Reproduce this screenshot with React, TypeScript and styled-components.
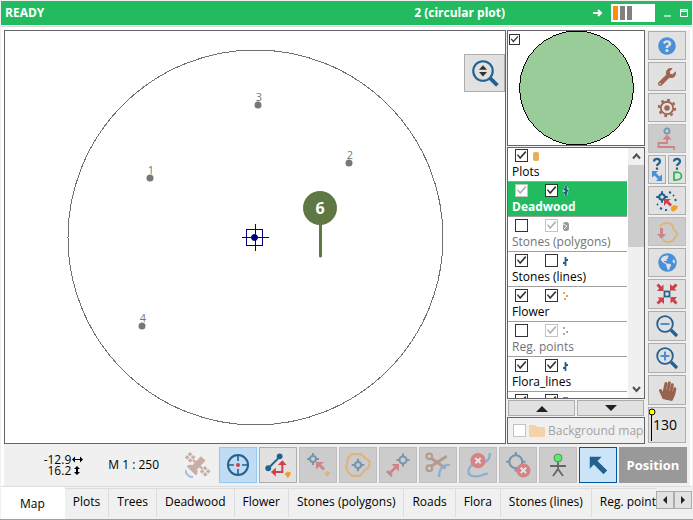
import React from "react";
import styled, { createGlobalStyle, css } from "styled-components";
import {
  FaQuestionCircle,
  FaWrench,
  FaHandPaper,
  FaGlobeAmericas,
  FaFolder,
} from "react-icons/fa";

const color = {
  green: "#22bb60",
  face: "#f0f0f0",
  button: "#e1e1e1",
  edge: "#adadad",
  frame: "#646469",
  navy: "#23628f",
  blue: "#4a90d9",
  red: "#cf3f49",
  orange: "#eda02f",
  brown: "#a0654f",
  line: "#dcdcdc",
};

const GlobalStyle = createGlobalStyle`
  * { box-sizing: border-box; }
  body {
    margin: 0;
    background: ${color.face};
    color: #000;
    font: 12px/16px "Open Sans", "Noto Sans", sans-serif;
  }
  button, input { font: inherit; color: inherit; margin: 0; padding: 0; }
`;

/* ---------- frame ---------- */

const Window = styled.div`
  display: flex;
  flex-direction: column;
  height: 100vh;
  padding: 1px 1px 0;
  border-bottom: 1px solid #a0a0a0;
`;

const TitleBar = styled.header`
  display: flex;
  align-items: center;
  height: 24px;
  padding: 0 0 0 4px;
  background: ${color.green};
  color: #fff;
  font-weight: 700;
`;

const Title = styled.span`
  margin-left: auto;
  margin-right: 88px;
`;

const Battery = styled.div`
  display: flex;
  gap: 2px;
  width: 44px;
  height: 18px;
  margin: 0 5px 0 8px;
  padding: 2px;
  background: #fff;
`;

const Cell = styled.span<{ $active?: boolean }>`
  width: 5px;
  background: ${(p) => (p.$active ? "#ff8c0a" : "#808080")};
`;

const TitleButton = styled.button`
  display: flex;
  width: 16px;
  border: 0;
  background: none;
  justify-content: center;
`;

const Page = styled.main`
  flex: 1;
  display: flex;
  flex-direction: column;
  min-height: 0;
  margin-top: 1px;
  padding: 3px 0 0 3px;
  background: #fff;
  border-top: 1px solid ${color.line};
  border-bottom: 1px solid ${color.line};
`;

const Workspace = styled.div`
  flex: 1;
  display: flex;
  min-height: 0;
  background: ${color.face};
  border-right: 2px solid #fff;
`;

const MapPane = styled.section`
  position: relative;
  flex: 1;
  min-width: 0;
  background: #fff;
  border: 1px solid ${color.frame};
`;

const MapDrawing = styled.svg`
  display: block;
  width: 100%;
  height: 100%;
`;

const SidePane = styled.aside`
  display: flex;
  flex-direction: column;
  width: 139px;
  padding-left: 1px;
`;

const Framed = styled.div`
  background: #fff;
  border: 1px solid ${color.frame};
`;

const Preview = styled(Framed)`
  position: relative;
  height: 116px;
  flex: none;
  margin-bottom: 1px;
  svg { display: block; width: 100%; height: 100%; }
  input { position: absolute; left: 1px; top: 3px; width: 11px; height: 11px; }
`;

/* ---------- layer list ---------- */

const LayerPanel = styled(Framed)`
  flex: 1;
  display: flex;
  min-height: 0;
  overflow: hidden;
`;

const Rows = styled.ul`
  flex: 1;
  margin: 0;
  padding: 0 1px 0 0;
  list-style: none;
  overflow: hidden;
`;

const Row = styled.li<{ $selected?: boolean; $dim?: boolean }>`
  height: 35px;
  padding-top: 1px;
  border-bottom: 1px solid #a0a0a0;
  color: ${(p) => (p.$dim ? "#737373" : "#000")};
  ${(p) =>
    p.$selected &&
    css`
      background: ${color.green};
      color: #fff;
      font-weight: 700;
    `}
  &:first-child { height: 34px; padding-top: 0; }
`;

const RowChecks = styled.div`
  display: flex;
  height: 15px;
  padding-left: 7px;
  align-items: center;
`;

const RowIcon = styled.svg`
  width: 12px;
  height: 12px;
  margin-left: 2px;
`;

const RowName = styled.div`
  padding: 1px 0 0 4px;
  white-space: nowrap;
`;

const Check = styled.input.attrs({ type: "checkbox" })`
  appearance: none;
  flex: none;
  width: 13px;
  height: 13px;
  border: 1px solid #333;
  background: #fff;
  & + & { margin-left: 17px; }
  &:checked::after {
    content: "";
    display: block;
    height: 100%;
    background: #333;
    clip-path: polygon(8% 46%, 18% 38%, 38% 62%, 84% 10%, 94% 20%, 38% 84%);
  }
  &:disabled { border-color: #c3c3c3; }
  &:disabled:checked::after { background: #b0b0b0; }
`;

const ScrollBar = styled.div`
  display: flex;
  flex-direction: column;
  align-items: center;
  justify-content: space-between;
  width: 16px;
  padding: 5px 0;
  background: ${color.face};
`;

const Thumb = styled.div`
  align-self: stretch;
  height: 82px;
  margin: 5px 0 auto;
  background: #cdcdcd;
`;

const Pair = styled.div`
  display: grid;
  grid-template-columns: 1fr 1fr;
  gap: 2px;
  padding: 1px;
  button { height: 16px; }
`;

const Background = styled(Framed)`
  display: flex;
  align-items: center;
  gap: 3px;
  height: 27px;
  padding-left: 5px;
  background: ${color.face};
  color: #a3a3a3;
  white-space: nowrap;
  svg { color: #f3d3a7; flex: none; }
`;

/* ---------- buttons ---------- */

const ToolButton = styled.button<{ $look?: "off" | "hot" | "picked" }>`
  display: flex;
  align-items: center;
  justify-content: center;
  min-width: 0;
  overflow: hidden;
  border: 1px solid ${color.edge};
  background: ${color.button};
  svg { flex: none; }
  ${(p) =>
    p.$look === "off" &&
    css`
      background: #cccccc;
      border-color: #bfbfbf;
      svg { opacity: 0.5; }
      svg.vivid { opacity: 1; }
    `}
  ${(p) =>
    p.$look === "hot" &&
    css`
      background: #bfdcf4;
      border-color: #90c8f6;
    `}
  ${(p) =>
    p.$look === "picked" &&
    css`
      background: #cce4f7;
      border-color: #00559b;
    `}
`;

const MapZoomButton = styled(ToolButton)`
  position: absolute;
  top: 23px;
  right: 0;
  width: 41px;
  height: 38px;
`;

const ToolColumn = styled.nav`
  display: flex;
  flex-direction: column;
  gap: 2px;
  width: 46px;
  padding: 1px 4px 0 4px;
  margin-left: -1px;
  & > * { height: 29px; flex: none; }
  & > .tall { height: 30px; }
  & > .post { height: 36px; flex: none; }
`;

const Split = styled.div`
  display: grid;
  grid-template-columns: 1fr 1fr;
  gap: 2px;
`;

const PostButton = styled(ToolButton)`
  justify-content: flex-start;
  font-size: 14px;
  svg { margin-right: -4px; }
`;

const BottomBar = styled.div`
  display: flex;
  align-items: center;
  gap: 2px;
  height: 42px;
  flex: none;
  padding-right: 3px;
  background: ${color.face};
  border-right: 2px solid #fff;
  & > button { width: 38px; height: 36px; flex: none; }
`;

const Readout = styled.div`
  display: grid;
  grid-template-columns: auto auto;
  align-items: center;
  justify-content: end;
  column-gap: 1px;
  line-height: 11px;
  text-align: right;
  margin-left: auto;
`;

const Scale = styled.div`
  margin: 0 18px 0 23px;
  white-space: nowrap;
`;

const Satellite = styled(ToolButton)`
  border: 0;
  background: none;
`;

const Position = styled(ToolButton)`
  && { width: 68px; }
  border: 0;
  background: #999;
  color: #fff;
  font-size: 13px;
  font-weight: 700;
`;

/* ---------- tabs ---------- */

const Tabs = styled.div`
  display: flex;
  height: 32px;
  flex: none;
`;

const TabList = styled.div`
  flex: 1;
  display: flex;
  min-width: 0;
  overflow: hidden;
`;

const Tab = styled.button<{ $active?: boolean }>`
  flex: none;
  height: 29px;
  margin-top: 1px;
  padding: 0 8px 2px;
  border: 0;
  border-top: 1px solid ${color.line};
  border-right: 1px solid ${color.line};
  background: ${color.face};
  white-space: nowrap;
  ${(p) =>
    p.$active &&
    css`
      height: 32px;
      margin-top: 0;
      padding: 1px 19px 0;
      border-color: #fff;
      background: #fff;
    `}
`;

const TabScroll = styled.div`
  display: flex;
  padding-top: 4px;
  button { width: 18px; height: 18px; }
`;

/* ---------- icons ---------- */

type IconProps = { children: React.ReactNode; size?: number; className?: string };
const Icon = ({ children, size = 24, className }: IconProps) => (
  <svg className={className} width={size} height={size} viewBox="0 0 24 24" fill="none" aria-hidden="true">
    {children}
  </svg>
);

const Target = ({ x, y, r = 3.5 }: { x: number; y: number; r?: number }) => (
  <g stroke={color.navy} strokeWidth="2">
    <circle cx={x} cy={y} r={r} />
    <path
      d={`M${x} ${y - r - 3}v3.5M${x} ${y + r - 0.5}v3.5M${x - r - 3} ${y}h3.5M${x + r - 0.5} ${y}h3.5`}
    />
  </g>
);

const Gear = () => (
  <Icon size={22}>
    <circle cx="12" cy="12" r="6.8" stroke={color.brown} strokeWidth="2" />
    <circle cx="12" cy="12" r="3" fill={color.brown} />
    <circle cx="12" cy="12" r="8.8" stroke={color.brown} strokeWidth="2.4" strokeDasharray="3 3.9" />
  </Icon>
);

const Sensor = () => (
  <Icon>
    <circle cx="12" cy="4" r="2.6" stroke={color.navy} strokeWidth="1.8" />
    <path d="M12 7.500l4.500 5h-9z" fill={color.red} />
    <path d="M12 12v4H3.500v4h15.500v3" stroke={color.red} strokeWidth="1.8" />
  </Icon>
);

const QueryMark = () => (
  <path d="M5 4.500C5 1 11 1 11 4.500C11 7 8 6.500 8 9M8 10.500v2.300" stroke={color.navy} strokeWidth="2.200" />
);

const QueryMove = () => (
  <svg width="16" height="25" viewBox="0 0 16 25" fill="none" aria-hidden="true">
    <QueryMark />
    <path d="M3 14h6l-2 2 3.500 3.500 2.500-2V24H7l2-2-3.500-3.500L3 20.500z" fill={color.blue} />
  </svg>
);

const QueryArea = () => (
  <svg width="16" height="25" viewBox="0 0 16 25" fill="none" aria-hidden="true">
    <QueryMark />
    <path d="M5 15.500v7.500C10 23.500 13 21.500 12.500 18.500C12 15 8 15 5 15.500z" stroke="#35b65a" strokeWidth="1.800" />
  </svg>
);

const SnapPoints = () => (
  <Icon>
    <Target x={7} y={8} r={2.8} />
    <path d="M9 10h7l-2.500 2 3.500 3.500-2 2-3.500-3.500L9 17z" fill={color.red} />
    <path d="M14 3l2 1M18 6l1 1M20 10l1 2M2 15l1 1M5 19l2 1M10 21h2" stroke={color.navy} strokeWidth="2" />
    <path d="M16 18l3-2 4 1-1 3-4 3-2-2z" fill={color.orange} />
  </Icon>
);

const ImportArea = () => (
  <Icon>
    <path
      d="M5 7C6 4 9 3 12 3c4 0 6 2 6 5 0 2 4 3 4 6s-2 3-3 5-3 3-6 3-5-1-5-3"
      stroke={color.orange}
      strokeWidth="2"
    />
    <path d="M5 8h3v6h3l-4.500 5L2 14h3z" fill={color.red} />
  </Icon>
);

const ZoomExtent = () => (
  <Icon>
    {[0, 90, 180, 270].map((a) => (
      <path
        key={a}
        d="M1.500 3.500L3.500 1.500 6.500 4.500 8.500 2.500V9H2L4.200 6.500z"
        fill={color.red}
        transform={`rotate(${a} 12 12)`}
      />
    ))}
    <rect x="9.500" y="9.500" width="5" height="5" stroke={color.navy} strokeWidth="1.800" />
  </Icon>
);

const Lens = ({ plus }: { plus?: boolean }) => (
  <Icon>
    <circle cx="10" cy="10" r="7.800" stroke={color.navy} strokeWidth="1.800" />
    <path d="M16 16l6 6" stroke={color.navy} strokeWidth="3.200" />
    <path d={plus ? "M5.500 10h9M10 5.500v9" : "M5.500 10h9"} stroke={color.blue} strokeWidth="2" />
  </Icon>
);

const LensUpDown = () => (
  <Icon size={32}>
    <circle cx="10.500" cy="10.500" r="7.300" stroke={color.navy} strokeWidth="1.600" />
    <path d="M15.800 15.800l5.500 5.500" stroke={color.navy} strokeWidth="2.800" />
    <path d="M7.500 9.500L10.500 6.200l3 3.300zM7.500 11.300h6l-3 3.300z" fill="#333" />
  </Icon>
);

const SatelliteDish = () => (
  <Icon size={26}>
    <g transform="rotate(43 12 11)">
      <path
        d="M-1 8h3v3h-3zM3 8h3v3H3zM-1 12h3v3h-3zM3 12h3v3H3zM18 8h3v3h-3zM22 8h3v3h-3zM18 12h3v3h-3zM22 12h3v3h-3zM6 10.500h12v2H6zM9 4h6v11H9zM6 20c0-7 12-7 12 0z"
        fill="#c9aea6"
      />
      <path d="M7 23c3 2.500 7 2.500 10 0" stroke="#9cc3ec" strokeWidth="2" />
    </g>
  </Icon>
);

const Crosshair = () => (
  <Icon>
    <circle cx="12" cy="12" r="10" stroke={color.navy} strokeWidth="2" />
    <path d="M12 2v6M12 16v6M2 12h6M16 12h6" stroke={color.navy} strokeWidth="1.600" />
    <circle cx="12" cy="12" r="2" fill={color.red} />
  </Icon>
);

const EditLine = () => (
  <Icon size={26}>
    <path d="M3 15L14 4" stroke={color.navy} strokeWidth="1.8" />
    <circle cx="13.500" cy="4" r="2.700" fill={color.navy} />
    <circle cx="3" cy="15" r="2.700" fill={color.navy} />
    <path d="M16 10v8.500H9" stroke={color.red} strokeWidth="1.800" />
    <path d="M12 12L16 7.500l4 4.500zM10 14.500v8L5.500 18.500z" fill={color.red} />
    <path d="M18 20l3-2 3 1-1 3-2 2z" fill={color.orange} />
  </Icon>
);

const MoveToPoint = () => (
  <Icon>
    <Target x={7} y={6} r={3} />
    <path d="M10 9h8l-3 2.500 4 4-2 2-4-4-3 3z" fill={color.red} />
    <path d="M18 20l3-2 3 1-1 3-2 2z" fill={color.orange} />
  </Icon>
);

const AreaPoint = () => (
  <Icon size={26}>
    <path
      d="M6 2h9l3 3 5 4-1 5-4 3-4 5-7 0-4-3-2-5 1-4 1-5z"
      stroke={color.orange}
      strokeWidth="2"
      strokeLinejoin="round"
    />
    <Target x={12} y={12} r={2.8} />
  </Icon>
);

const MeasurePoint = () => (
  <Icon>
    <Target x={17} y={7} r={3.500} />
    <path d="M3 21L10 14M1 18l5 5" stroke={color.red} strokeWidth="2.600" />
    <path d="M5.500 11H13v7.500z" fill={color.red} />
  </Icon>
);

const Cut = () => (
  <Icon size={26}>
    <g stroke="#a06a55" strokeWidth="2">
      <circle cx="4" cy="4" r="2.600" />
      <circle cx="4" cy="15" r="2.600" />
      <path d="M6 6L19 15M6 13L20 4" strokeWidth="2.800" />
    </g>
    <path d="M23 12c-6-1-10 3-10 11" stroke={color.blue} strokeWidth="2" />
  </Icon>
);

const Cross = ({ x, y, r }: { x: number; y: number; r: number }) => (
  <g>
    <circle cx={x} cy={y} r={r} fill="#e03a44" />
    <path
      d={`M${x - 2.5} ${y - 2.5}l5 5M${x + 2.5} ${y - 2.5}l-5 5`}
      stroke="#fff"
      strokeWidth="1.800"
    />
  </g>
);

const DeleteLine = () => (
  <Icon size={26}>
    <path d="M23 1c0 9-6 9-13 10S1 20 6 22s9-1 15-2" stroke={color.blue} strokeWidth="2" />
    <Cross x={12} y={8} r={7} />
  </Icon>
);

const DeletePoint = () => (
  <Icon size={26}>
    <Target x={10} y={9} r={6} />
    <Cross x={17} y={17} r={6.500} />
  </Icon>
);

const Person = () => (
  <Icon className="vivid">
    <path d="M4 13h16M12 9v8M12 16l-5 7M12 16l5 7" stroke="#666" strokeWidth="1.800" />
    <circle cx="12" cy="5" r="4" fill="#55ee66" stroke="#5c8c60" />
  </Icon>
);

const Pointer = () => (
  <Icon size={22}>
    <path d="M3 3h13l-4.500 4.500L22 18l-4 4L7.500 11.500 3 16z" fill={color.navy} />
  </Icon>
);

const Triangle = ({ d, w = 12, h = 7 }: { d: string; w?: number; h?: number }) => (
  <svg width={w} height={h} viewBox={`0 0 ${w} ${h}`} aria-hidden="true">
    <path d={d} fill="#222" />
  </svg>
);

const Chevron = ({ d }: { d: string }) => (
  <svg width="9" height="7" viewBox="0 0 9 7" fill="none" aria-hidden="true">
    <path d={d} stroke="#505050" strokeWidth="2" />
  </svg>
);

const DoubleArrow = ({ vertical }: { vertical?: boolean }) => (
  <svg width="11" height="9" viewBox="0 0 11 9" aria-hidden="true">
    <path
      d={
        vertical
          ? "M5 0L8 3H6V6H8L5 9 2 6H4V3H2z"
          : "M0 4.500L3 1.500V4H8V1.500L11 4.500 8 7.500V5H3V7.500z"
      }
      fill="#000"
    />
  </svg>
);

/* ---------- data ---------- */

type Mark = "block" | "log" | "stone" | "line" | "dots" | "graydots" | "herb";

const marks: Record<Mark, React.ReactNode> = {
  block: <rect x="3" y="2" width="6" height="9" rx="2" fill="#e9ad5d" />,
  log: (
    <g fill="none">
      <path d="M6 1v10M3 5l5 3M8 3L5 8" stroke="#fff" strokeWidth="3" opacity=".5" />
      <path d="M6 1v10M4 4l4 2M4 8l3-1" stroke="#174f80" strokeWidth="1.500" />
    </g>
  ),
  stone: (
    <g>
      <rect x="3" y="2" width="6" height="9" rx="2.500" fill="#999" />
      <path d="M3 4l4 2-3 3" stroke="#eee" fill="none" />
    </g>
  ),
  line: <path d="M5.500 2v9M5.500 5H8M5.500 8H3" stroke={color.navy} strokeWidth="1.800" fill="none" />,
  dots: <path d="M3 2h2v2H3zM6 5h2v2H6zM4 8h2v2H4z" fill="#e9a64b" />,
  graydots: <path d="M3 2h2v2H3zM6 6h2v2H6zM3 8h2v2H3z" fill="#aaa" />,
  herb: <rect x="3" y="2" width="5" height="8" fill="#35a65a" />,
};

type Layer = {
  name: string;
  mark: Mark;
  visible: boolean;
  visibleLocked?: boolean;
  editable?: boolean;
  editLocked?: boolean;
  selected?: boolean;
};

const layers: Layer[] = [
  { name: "Plots", mark: "block", visible: true },
  { name: "Deadwood", mark: "log", visible: true, visibleLocked: true, editable: true, selected: true },
  { name: "Stones (polygons)", mark: "stone", visible: false, editable: true, editLocked: true },
  { name: "Stones (lines)", mark: "line", visible: true, editable: false },
  { name: "Flower", mark: "dots", visible: true, editable: true },
  { name: "Reg. points", mark: "graydots", visible: false, editable: true, editLocked: true },
  { name: "Flora_lines", mark: "line", visible: true, editable: true },
  { name: "", mark: "herb", visible: true, editable: true },
];

const trees = [
  { id: "1", x: 145, y: 147, lx: 146, ly: 143 },
  { id: "2", x: 344, y: 132, lx: 345, ly: 128 },
  { id: "3", x: 253, y: 74, lx: 254, ly: 70 },
  { id: "4", x: 137, y: 295, lx: 138, ly: 291 },
];

const tabs = [
  "Map",
  "Plots",
  "Trees",
  "Deadwood",
  "Flower",
  "Stones (polygons)",
  "Roads",
  "Flora",
  "Stones (lines)",
  "Reg. points",
];

const PlotMap = () => (
  <MapDrawing viewBox="0 0 500 411" preserveAspectRatio="xMinYMin meet">
    <circle cx="250.500" cy="206.500" r="187.500" fill="none" stroke="#707070" shapeRendering="crispEdges" />
    {trees.map((t) => (
      <g key={t.id} fill="#777">
        <circle cx={t.x} cy={t.y} r="3.500" />
        <text x={t.lx} y={t.ly} fontSize="11" textAnchor="middle">
          {t.id}
        </text>
      </g>
    ))}
    <g stroke="#000080" fill="none">
      <rect x="241.500" y="198.500" width="16" height="16" />
      <path d="M237 206.500h27M250.500 193v27" />
      <circle cx="249.500" cy="206.500" r="3" fill="#000080" />
    </g>
    <path d="M315.500 190v35" stroke="#5f7843" strokeWidth="3" strokeLinecap="round" />
    <circle cx="315" cy="177" r="17" fill="#5f7843" />
    <text x="315" y="183" fontSize="16" fontWeight="700" fill="#fff" textAnchor="middle">
      6
    </text>
  </MapDrawing>
);

const LayerRow = ({ layer }: { layer: Layer }) => (
  <Row $selected={layer.selected} $dim={layer.editLocked}>
    <RowChecks>
      <Check
        defaultChecked={layer.visible}
        disabled={layer.visibleLocked}
        aria-label={`Show ${layer.name}`}
      />
      {layer.editable !== undefined && (
        <Check
          defaultChecked={layer.editable}
          disabled={layer.editLocked}
          aria-label={`Edit ${layer.name}`}
        />
      )}
      <RowIcon viewBox="0 0 12 12" aria-hidden="true">
        {marks[layer.mark]}
      </RowIcon>
    </RowChecks>
    {layer.name && <RowName>{layer.name}</RowName>}
  </Row>
);

export default function App() {
  return (
    <Window>
      <GlobalStyle />
      <TitleBar>
        <span>READY</span>
        <Title>2 (circular plot)</Title>
        <svg width="10" height="10" viewBox="0 0 10 10" fill="none" aria-hidden="true">
          <path d="M0 5h8M5 2L8 5 5 8" stroke="#fff" strokeWidth="2" />
        </svg>
        <Battery>
          <Cell $active />
          <Cell />
          <Cell />
        </Battery>
        <TitleButton aria-label="Minimize">
          <svg width="8" height="8" viewBox="0 0 8 8">
            <path d="M0 7h7" stroke="#fff" strokeWidth="1.200" />
          </svg>
        </TitleButton>
        <TitleButton aria-label="Maximize">
          <svg width="8" height="8" viewBox="0 0 8 8" fill="none">
            <path d="M.5.5h7v7h-7zM0 2.500h8M0 1h8" stroke="#fff" />
          </svg>
        </TitleButton>
      </TitleBar>

      <Page>
        <Workspace>
          <MapPane>
            <PlotMap />
            <MapZoomButton aria-label="Zoom by dragging">
              <LensUpDown />
            </MapZoomButton>
          </MapPane>

          <SidePane>
            <Preview>
              <svg viewBox="0 0 135 115" preserveAspectRatio="xMidYMid meet">
                <circle cx="68" cy="57.500" r="57.500" fill="#99cc99" stroke="#000" shapeRendering="crispEdges" />
              </svg>
              <Check defaultChecked aria-label="Show overview" />
            </Preview>
            <LayerPanel>
              <Rows>
                {layers.map((l) => (
                  <LayerRow key={l.name} layer={l} />
                ))}
              </Rows>
              <ScrollBar>
                <Chevron d="M1 5.500l3.500-4L8 5.500" />
                <Thumb />
                <Chevron d="M1 1l3.500 4L8 1" />
              </ScrollBar>
            </LayerPanel>
            <Pair>
              <ToolButton aria-label="Move layer up">
                <Triangle d="M0 7L6 1l6 6z" />
              </ToolButton>
              <ToolButton aria-label="Move layer down">
                <Triangle d="M0 0h12L6 6z" />
              </ToolButton>
            </Pair>
            <Background>
              <Check disabled id="background-map" />
              <FaFolder size={16} />
              <label htmlFor="background-map">Background map</label>
            </Background>
          </SidePane>

          <ToolColumn aria-label="Map tools">
            <ToolButton aria-label="Help">
              <FaQuestionCircle size={18} color={color.blue} />
            </ToolButton>
            <ToolButton aria-label="Tools">
              <FaWrench size={18} color={color.brown} />
            </ToolButton>
            <ToolButton aria-label="Settings">
              <Gear />
            </ToolButton>
            <ToolButton $look="off" aria-label="Sensor">
              <Sensor />
            </ToolButton>
            <Split>
              <ToolButton aria-label="Measure distance">
                <QueryMove />
              </ToolButton>
              <ToolButton aria-label="Measure area">
                <QueryArea />
              </ToolButton>
            </Split>
            <ToolButton aria-label="Snap to points">
              <SnapPoints />
            </ToolButton>
            <ToolButton $look="off" aria-label="Import area">
              <ImportArea />
            </ToolButton>
            <ToolButton aria-label="Web map">
              <FaGlobeAmericas size={19} color={color.blue} />
            </ToolButton>
            <ToolButton className="tall" aria-label="Zoom to extent">
              <ZoomExtent />
            </ToolButton>
            <ToolButton className="tall" aria-label="Zoom out">
              <Lens />
            </ToolButton>
            <ToolButton className="tall" aria-label="Zoom in">
              <Lens plus />
            </ToolButton>
            <ToolButton className="tall" aria-label="Pan">
              <FaHandPaper size={19} color="#99624e" transform="rotate(12)" />
            </ToolButton>
            <PostButton className="post">
              <svg width="8" height="34" viewBox="0 0 8 34" aria-hidden="true">
                <path d="M2.500 6v27" stroke="#000" />
                <circle cx="3" cy="4" r="3" fill="#ff0" stroke="#000" />
              </svg>
              130
            </PostButton>
          </ToolColumn>
        </Workspace>

        <BottomBar>
          <Readout>
            <span>-12.9</span>
            <DoubleArrow />
            <span>16.2</span>
            <DoubleArrow vertical />
          </Readout>
          <Scale>M 1 : 250</Scale>
          <Satellite aria-label="GPS">
            <SatelliteDish />
          </Satellite>
          <ToolButton $look="hot" aria-label="Center map">
            <Crosshair />
          </ToolButton>
          <ToolButton aria-label="Edit line">
            <EditLine />
          </ToolButton>
          <ToolButton $look="off" aria-label="Move point">
            <MoveToPoint />
          </ToolButton>
          <ToolButton $look="off" aria-label="Point in area">
            <AreaPoint />
          </ToolButton>
          <ToolButton $look="off" aria-label="Measure point">
            <MeasurePoint />
          </ToolButton>
          <ToolButton $look="off" aria-label="Cut line">
            <Cut />
          </ToolButton>
          <ToolButton $look="off" aria-label="Delete line">
            <DeleteLine />
          </ToolButton>
          <ToolButton $look="off" aria-label="Delete point">
            <DeletePoint />
          </ToolButton>
          <ToolButton $look="off" aria-label="Operator position">
            <Person />
          </ToolButton>
          <ToolButton $look="picked" aria-label="Select">
            <Pointer />
          </ToolButton>
          <Position>Position</Position>
        </BottomBar>
      </Page>

      <Tabs>
        <TabList role="tablist">
          {tabs.map((t, i) => (
            <Tab key={t} role="tab" aria-selected={i === 0} $active={i === 0}>
              {t}
            </Tab>
          ))}
        </TabList>
        <TabScroll>
          <ToolButton aria-label="Previous tabs">
            <Triangle w={4} h={8} d="M4 0v8L0 4z" />
          </ToolButton>
          <ToolButton aria-label="Next tabs">
            <Triangle w={4} h={8} d="M0 0v8L4 4z" />
          </ToolButton>
        </TabScroll>
      </Tabs>
    </Window>
  );
}
